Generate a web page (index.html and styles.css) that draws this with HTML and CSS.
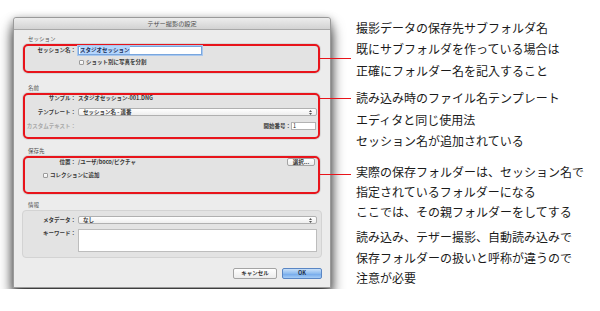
FILE: index.html
```html
<!DOCTYPE html>
<html lang="ja">
<head>
    <meta charset="UTF-8"/>
    <title>テザー撮影の設定</title>
    <link rel="stylesheet" href="styles.css">
</head>
<body>
<div class="page">
    <div class="window">
        <div class="titlebar">テザー撮影の設定</div>
        <div class="content">
            <div class="group-title">セッション</div>
            <div class="group marked box-session">
                <div class="row">
                    <span class="label">セッション名：</span>
                    <div class="textfield focused"><span class="selected">スタジオセッション</span></div>
                </div>
                <div class="row check-row">
                    <span class="checkbox"></span>
                    <span>ショット別に写真を分割</span>
                </div>
            </div>

            <div class="group-title spaced">名前</div>
            <div class="group marked box-name">
                <div class="row">
                    <span class="label">サンプル：</span>
                    <span class="value">スタジオセッション-001.DNG</span>
                </div>
                <div class="row">
                    <span class="label">テンプレート：</span>
                    <div class="popup">
                        <span>セッション名 - 連番</span>
                        <svg class="arrows" width="3" height="5" viewBox="0 0 3 5"><path d="M0 2 L1.5 0 L3 2 Z M0 3 L1.5 5 L3 3 Z" fill="#555"/></svg>
                    </div>
                </div>
                <div class="row">
                    <span class="label disabled">カスタムテキスト：</span>
                    <span class="grow"></span>
                    <span>開始番号：</span>
                    <div class="textfield number">1</div>
                </div>
            </div>

            <div class="group-title spaced-sm">保存先</div>
            <div class="group marked box-dest">
                <div class="row">
                    <span class="label">位置：</span>
                    <span class="value">/ユーザ/boco/ピクチャ</span>
                    <span class="grow"></span>
                    <button class="btn choose">選択...</button>
                </div>
                <div class="row check-row collection">
                    <span class="checkbox"></span>
                    <span>コレクションに追加</span>
                </div>
            </div>

            <div class="group-title spaced-xs">情報</div>
            <div class="group box-info">
                <div class="row">
                    <span class="label">メタデータ：</span>
                    <div class="popup">
                        <span>なし</span>
                        <svg class="arrows" width="3" height="5" viewBox="0 0 3 5"><path d="M0 2 L1.5 0 L3 2 Z M0 3 L1.5 5 L3 3 Z" fill="#555"/></svg>
                    </div>
                </div>
                <div class="row top">
                    <span class="label keyword">キーワード：</span>
                    <div class="textarea"></div>
                </div>
            </div>

            <div class="buttons">
                <button class="btn cancel">キャンセル</button>
                <button class="btn ok">OK</button>
            </div>
        </div>
    </div>

    <div class="notes">
        <p class="note n1">撮影データの保存先サブフォルダ名<br>既にサブフォルダを作っている場合は<br>正確にフォルダー名を記入すること</p>
        <p class="note n2">読み込み時のファイル名テンプレート<br>エディタと同じ使用法<br>セッション名が追加されている</p>
        <p class="note n3">実際の保存フォルダーは、セッション名で<br>指定されているフォルダーになる<br>ここでは、その親フォルダーをしてする</p>
        <p class="note n4">読み込み、テザー撮影、自動読み込みで<br>保存フォルダーの扱いと呼称が違うので<br>注意が必要</p>
    </div>
</div>
</body>
</html>
```

FILE: styles.css
```css
* {
    box-sizing: border-box;
}
body {
    margin: 0;
    background-color: #FFFFFF;
    font-family: "Noto Sans CJK JP", sans-serif;
    color: #1A1A1A;
}
.page {
    display: flex;
    align-items: flex-start;
    padding: 17px 0 0 13px;
}

/* dialog window */
.window {
    width: 318px;
    height: 271px;
    border: 1px solid #9A9A9A;
    border-radius: 3px 3px 0 0;
    background-color: #ECECEC;
    box-shadow: 0 10px 14px rgba(0, 0, 0, 0.75), 0 2px 9px rgba(0, 0, 0, 0.35);
    font-size: 5.5px;
    font-weight: bold;
    color: #383838;
}
.titlebar {
    height: 12px;
    line-height: 11px;
    text-align: center;
    font-size: 6.2px;
    font-weight: normal;
    color: #4A4A4A;
    background: linear-gradient(#EDEDED, #D2D2D2);
    border-bottom: 1px solid #A8A8A8;
    border-radius: 3px 3px 0 0;
}
.content {
    padding: 6px 8px 8px;
}
.group-title {
    height: 7px;
    line-height: 7px;
    padding-left: 6px;
    margin-bottom: 1px;
    color: #555;
    font-weight: normal;
}
.group-title.spaced {
    margin-top: 12px;
}
.group-title.spaced-sm {
    margin-top: 9px;
}
.group-title.spaced-xs {
    margin-top: 8px;
}
.group {
    position: relative;
    display: flex;
    flex-direction: column;
    background-color: #E3E3E3;
    border: 1px solid #D3D3D3;
    border-radius: 4px;
    padding: 0 4px 0 2px;
}
.group.marked {
    border: 2px solid #E8141B;
    border-radius: 5px;
    margin: 0 2px 0 1px;
    padding: 0 1px 0 0;
    box-shadow: 0 0 0 1px #D8D8D8;
}
.group.marked::after {
    content: "";
    position: absolute;
    left: calc(100% + 2px);
    width: 31px;
    height: 1px;
    background-color: #E8141B;
}
.box-session {
    height: 29px;
    padding-top: 4px;
    gap: 4px;
}
.box-session::after {
    top: 12px;
}
.box-name {
    height: 46px;
    padding-top: 3px;
    gap: 6px;
}
.box-name::after {
    top: 3px;
}
.box-dest {
    height: 38px;
    padding-top: 5px;
    gap: 6px;
}
.box-dest::after {
    top: 16px;
}
.box-info {
    height: 48px;
    padding-top: 5px;
    gap: 5px;
}

.row {
    display: flex;
    align-items: center;
    min-height: 7px;
    line-height: 7px;
}
.row.top {
    align-items: flex-start;
}
.label {
    width: 51px;
    margin-right: 2px;
    text-align: right;
    white-space: nowrap;
}
.label.disabled {
    color: #A9A9A9;
}
.label.keyword {
    padding-top: 1px;
}
.grow {
    flex: 1;
}
.check-row {
    padding-left: 54px;
    gap: 2px;
}
.check-row.collection {
    padding-left: 18px;
}
.checkbox {
    width: 5px;
    height: 5px;
    border: 1px solid #9C9C9C;
    border-radius: 1px;
    background: linear-gradient(#FFFFFF, #EDEDED);
}

/* controls */
.textfield {
    height: 9px;
    line-height: 7px;
    padding: 0 1px;
    background-color: #FFFFFF;
    border: 1px solid #B2B2B2;
}
.textfield.focused {
    width: 124px;
    border-color: #79A6DE;
    box-shadow: 0 0 0 1px #A9C8EE;
}
.selected {
    background-color: #B5D5FC;
    color: #1A2E55;
}
.textfield.number {
    width: 25px;
    height: 8px;
    margin-right: 1px;
    font-weight: normal;
    color: #222;
}
.popup {
    flex: 1;
    height: 8px;
    display: flex;
    align-items: center;
    justify-content: space-between;
    padding: 0 4px 0 4px;
    background: linear-gradient(#FFFFFF, #EEEEEE);
    border: 1px solid #B0B0B0;
    border-radius: 2px;
}
.arrows {
    display: block;
}
.textarea {
    flex: 1;
    height: 23px;
    background-color: #FFFFFF;
    border: 1px solid #BDBDBD;
}
.btn {
    font-family: "Noto Sans CJK JP", sans-serif;
    font-size: 5.5px;
    font-weight: bold;
    color: #333;
    padding: 0;
    line-height: 7px;
    border: 1px solid #A4A4A4;
    border-radius: 2px;
    background: linear-gradient(#FFFFFF, #ECECEC);
}
.btn.choose {
    width: 28px;
    height: 8px;
    margin-right: 2px;
}
.buttons {
    display: flex;
    justify-content: flex-end;
    gap: 5px;
    margin-top: 10px;
}
.btn.cancel {
    width: 44px;
    height: 11px;
}
.btn.ok {
    width: 40px;
    height: 11px;
    color: #1E2E48;
    border-color: #5A86C4;
    background: linear-gradient(#C9E0F9, #8DBBEF 50%, #6FA6EA 51%, #A5CCF6);
}

/* annotations */
.notes {
    margin-left: 25px;
    font-size: 12px;
    color: #1A1A1A;
}
.note {
    margin: 0;
    line-height: 21.4px;
    white-space: nowrap;
}
.note.n2 {
    margin-top: 6px;
}
.note.n3 {
    margin-top: 11px;
    line-height: 20px;
}
.note.n4 {
    margin-top: 5px;
    line-height: 20.5px;
}
```
